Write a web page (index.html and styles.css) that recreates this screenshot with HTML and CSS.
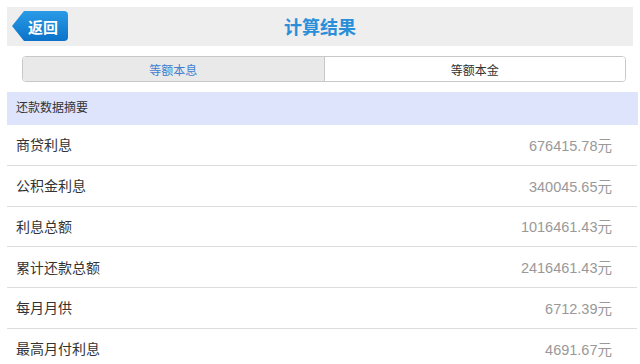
FILE: index.html
```html
<!DOCTYPE html>
<html lang="zh">
<head>
  <meta charset="UTF-8" />
  <meta name="viewport" content="width=device-width, initial-scale=1.0"/>
  <title>计算结果</title>
  <link rel="stylesheet" href="styles.css">
</head>
<body>
  <div class="page">
    <div class="header">
      <a class="back-btn" href="#">返回</a>
      <h1 class="title">计算结果</h1>
    </div>

    <div class="tabs">
      <div class="tab active">等额本息</div>
      <div class="tab">等额本金</div>
    </div>

    <div class="section-title">还款数据摘要</div>

    <ul class="result-list">
      <li><span class="label">商贷利息</span><span class="value">676415.78元</span></li>
      <li><span class="label">公积金利息</span><span class="value">340045.65元</span></li>
      <li><span class="label">利息总额</span><span class="value">1016461.43元</span></li>
      <li><span class="label">累计还款总额</span><span class="value">2416461.43元</span></li>
      <li><span class="label">每月月供</span><span class="value">6712.39元</span></li>
      <li><span class="label">最高月付利息</span><span class="value">4691.67元</span></li>
    </ul>
  </div>
</body>
</html>
```

FILE: styles.css
```css
* {
  margin: 0;
  padding: 0;
  box-sizing: border-box;
}

html, body {
  height: 100%;
  font-family: "Liberation Sans", Arial, "Noto Sans CJK SC", sans-serif;
  background-color: #fff;
  color: #333;
}

.page {
  padding: 7px 2px 0 7px;
}

.header {
  position: relative;
  display: flex;
  align-items: center;
  justify-content: center;
  height: 39px;
  margin-right: 5px;
  background-color: #eeeeee;
}

.back-btn {
  position: absolute;
  left: 5px;
  top: 4px;
  display: flex;
  align-items: center;
  justify-content: center;
  width: 56px;
  height: 30px;
  padding-left: 6px;
  color: #fff;
  font-size: 15px;
  font-weight: bold;
  text-decoration: none;
  background: linear-gradient(#2a9be6, #0b72c8);
  border-radius: 0 4px 4px 0;
  clip-path: polygon(12px 0, 100% 0, 100% 100%, 12px 100%, 0 50%);
}

.title {
  font-size: 18px;
  font-weight: bold;
  color: #2a8fd8;
  margin-top: -2px;
}

.tabs {
  display: flex;
  height: 26px;
  margin: 10px 12px 10px 15px;
  border: 1px solid #c8c8c8;
  border-radius: 4px;
  overflow: hidden;
}

.tab {
  flex: 1;
  display: flex;
  align-items: center;
  justify-content: center;
  font-size: 12px;
  color: #333;
  background-color: #fff;
}

.tab.active {
  color: #3f7fd0;
  background-color: #e9e9e9;
  border-right: 1px solid #c8c8c8;
}

.section-title {
  height: 33px;
  line-height: 33px;
  padding-left: 9px;
  font-size: 12px;
  color: #333;
  background-color: #dfe4fd;
}

.result-list {
  list-style: none;
  margin-right: 1px;
}

.result-list li {
  display: flex;
  justify-content: space-between;
  align-items: center;
  height: 40.75px;
  padding: 0 25px 1px 9px;
  border-bottom: 1px solid #dddddd;
}

.label {
  font-size: 14px;
  color: #333;
}

.value {
  font-size: 14.5px;
  color: #999;
}
```
